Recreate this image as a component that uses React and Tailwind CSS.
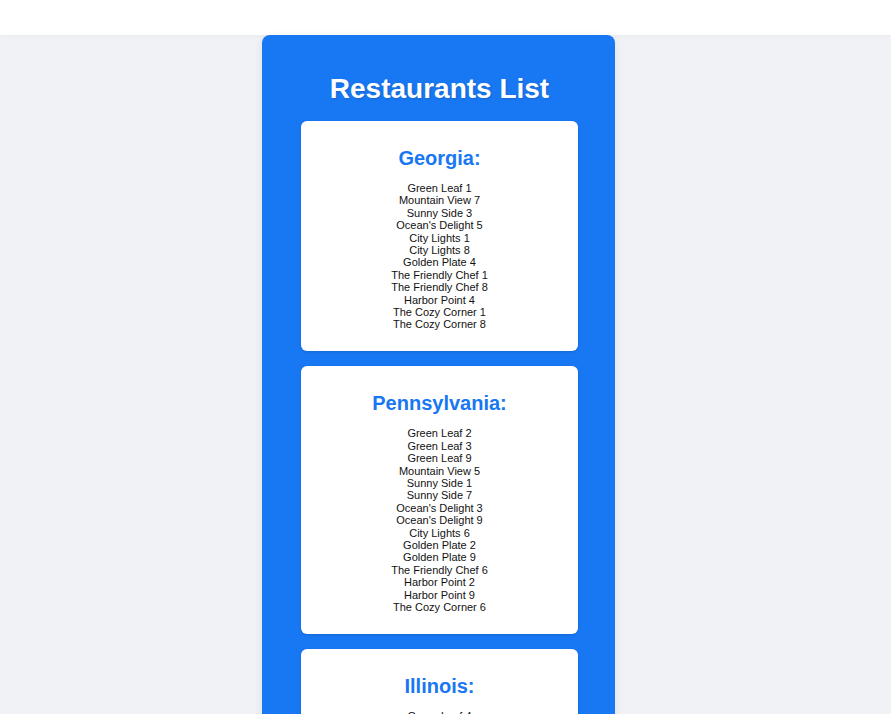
const states = [
  {
    name: "Georgia",
    items: [
      "Green Leaf 1",
      "Mountain View 7",
      "Sunny Side 3",
      "Ocean's Delight 5",
      "City Lights 1",
      "City Lights 8",
      "Golden Plate 4",
      "The Friendly Chef 1",
      "The Friendly Chef 8",
      "Harbor Point 4",
      "The Cozy Corner 1",
      "The Cozy Corner 8",
    ],
  },
  {
    name: "Pennsylvania",
    items: [
      "Green Leaf 2",
      "Green Leaf 3",
      "Green Leaf 9",
      "Mountain View 5",
      "Sunny Side 1",
      "Sunny Side 7",
      "Ocean's Delight 3",
      "Ocean's Delight 9",
      "City Lights 6",
      "Golden Plate 2",
      "Golden Plate 9",
      "The Friendly Chef 6",
      "Harbor Point 2",
      "Harbor Point 9",
      "The Cozy Corner 6",
    ],
  },
  {
    name: "Illinois",
    items: [
      "Green Leaf 4",
      "Mountain View 2",
      "Sunny Side 8",
      "Ocean's Delight 1",
      "City Lights 3",
      "Golden Plate 6",
      "The Friendly Chef 3",
      "Harbor Point 7",
      "The Cozy Corner 2",
    ],
  },
];

function StateCard({ name, items }) {
  return (
    <div className="bg-white rounded-md shadow-sm pt-[26px] pb-[20.5px] text-center">
      <h2 className="text-[20px] leading-[23px] font-bold text-[#1877f2] mb-[12px]">
        {name}:
      </h2>
      <ul>
        {items.map((item, i) => (
          <li key={i} className="text-[11px] leading-[12.4px] text-[#111]">
            {item}
          </li>
        ))}
      </ul>
    </div>
  );
}

export default function App() {
  return (
    <div className="min-h-screen bg-[#f0f2f5] font-['Liberation_Sans',Arial,sans-serif]">
      <div className="h-[35px] bg-white shadow-[0_1px_4px_rgba(0,0,0,0.04)]" />
      <div className="flex justify-center pr-[14px]">
        <div className="w-[353px] bg-[#1877f2] rounded-lg pt-[36px] pb-[40px] pl-[39px] pr-[37px] shadow-[0_2px_8px_rgba(0,0,0,0.08)]">
          <h1 className="text-[28px] leading-[36px] font-bold text-white text-center mb-[14px] [text-shadow:1px_1px_2px_rgba(0,0,0,0.15)]">
            Restaurants List
          </h1>
          <div className="flex flex-col gap-[15px]">
            {states.map((s) => (
              <StateCard key={s.name} name={s.name} items={s.items} />
            ))}
          </div>
        </div>
      </div>
    </div>
  );
}
